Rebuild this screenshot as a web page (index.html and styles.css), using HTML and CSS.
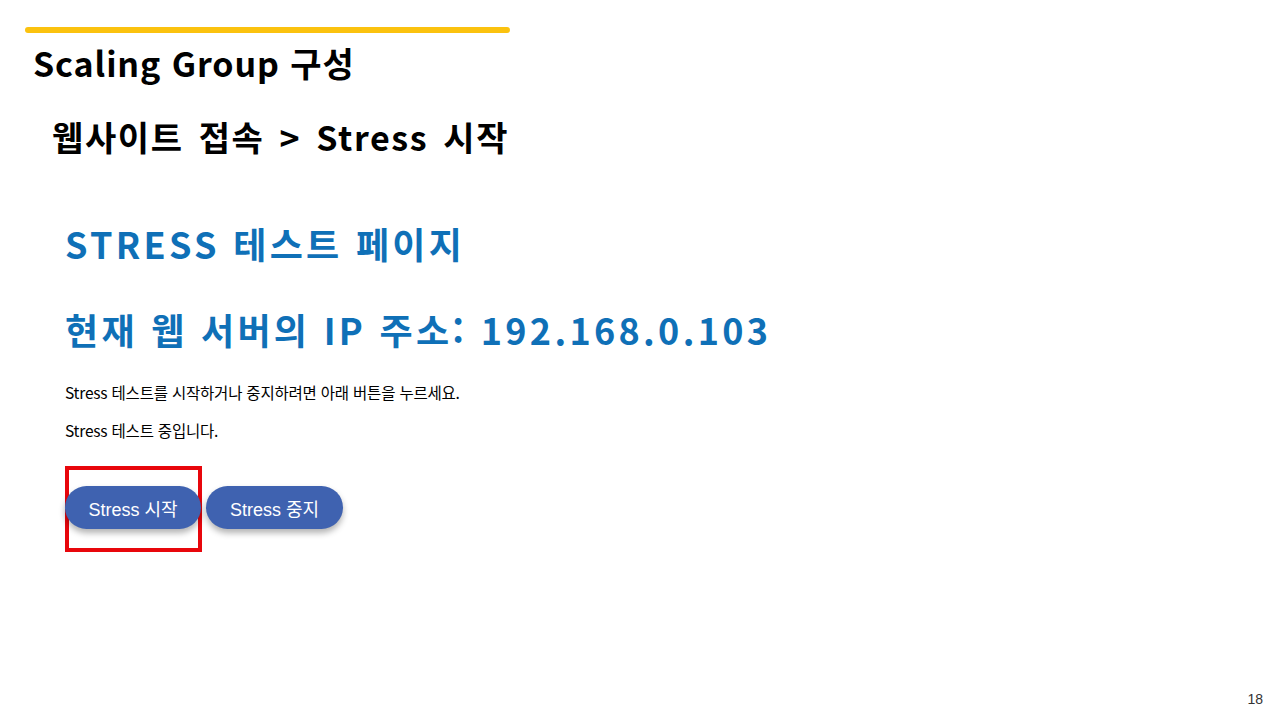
FILE: index.html
```html
<!DOCTYPE html>
<html lang="ko">
<head>
    <meta charset="UTF-8">
    <title>Scaling Group 구성</title>
    <link rel="stylesheet" href="styles.css">
</head>
<body>
    <div class="slide">
        <div class="slide-header">
            <div class="accent-bar"></div>
            <h1 class="slide-title">Scaling Group 구성</h1>
            <h2 class="slide-subtitle">웹사이트 접속 &gt; Stress 시작</h2>
        </div>

        <div class="capture">
            <h3 class="page-heading">STRESS 테스트 페이지</h3>
            <h3 class="page-heading ip-line">현재 웹 서버의 IP 주소: 192.168.0.103</h3>
            <p class="page-text intro">Stress 테스트를 시작하거나 중지하려면 아래 버튼을 누르세요.</p>
            <p class="page-text">Stress 테스트 중입니다.</p>

            <div class="button-row">
                <div class="highlight">
                    <button class="stress-btn">Stress 시작</button>
                </div>
                <button class="stress-btn">Stress 중지</button>
            </div>
        </div>

        <div class="page-number">18</div>
    </div>
</body>
</html>
```

FILE: styles.css
```css
* {
    margin: 0;
    padding: 0;
    box-sizing: border-box;
}

body {
    background: #ffffff;
    font-family: "Noto Sans CJK KR", "Noto Sans", sans-serif;
    color: #000;
}

.slide {
    width: 1280px;
    height: 720px;
    display: flex;
    flex-direction: column;
    overflow: hidden;
}

/* Slide header */
.slide-header {
    padding-top: 27px;
}

.accent-bar {
    width: 485px;
    height: 6px;
    margin-left: 25px;
    background: #fbc20f;
    border-radius: 3px;
}

.slide-title {
    margin: 7px 0 0 33px;
    font-size: 34px;
    font-weight: 700;
    line-height: 46px;
    letter-spacing: 0.9px;
}

.slide-subtitle {
    margin: 28px 0 0 52px;
    font-size: 34px;
    font-weight: 700;
    line-height: 46px;
    letter-spacing: 1.6px;
    word-spacing: 4px;
}

/* Captured web page */
.capture {
    margin: 58px 0 0 65px;
}

.page-heading {
    color: #0f70b7;
    font-size: 36px;
    font-weight: 700;
    line-height: 50px;
    letter-spacing: 3.3px;
}

.ip-line {
    margin-top: 36px;
}

.page-text {
    font-size: 15.5px;
    line-height: 22px;
    margin-top: 16px;
    letter-spacing: -0.2px;
}

.page-text.intro {
    margin-top: 27px;
}

.button-row {
    display: flex;
    align-items: flex-start;
    gap: 4px;
    margin-top: 25px;
}

.highlight {
    width: 137px;
    height: 86px;
    border: 4px solid #e8060c;
    padding-top: 16px;
}

.stress-btn {
    height: 43px;
    padding: 0 24px;
    border: none;
    border-radius: 22px;
    background: #3f62b0;
    color: #fff;
    font-family: "Liberation Sans", Arial, "Noto Sans CJK KR", sans-serif;
    font-size: 18px;
    box-shadow: 0 4px 6px rgba(0, 0, 0, 0.3);
    margin-top: 20px;
}

.highlight .stress-btn {
    margin: 0 0 0 -4px;
    width: 136px;
    padding: 0;
}

.page-number {
    margin-top: auto;
    align-self: flex-end;
    margin-right: 17px;
    margin-bottom: 13px;
    font-family: "Liberation Sans", Arial, sans-serif;
    font-size: 14px;
    color: #333;
}
```
